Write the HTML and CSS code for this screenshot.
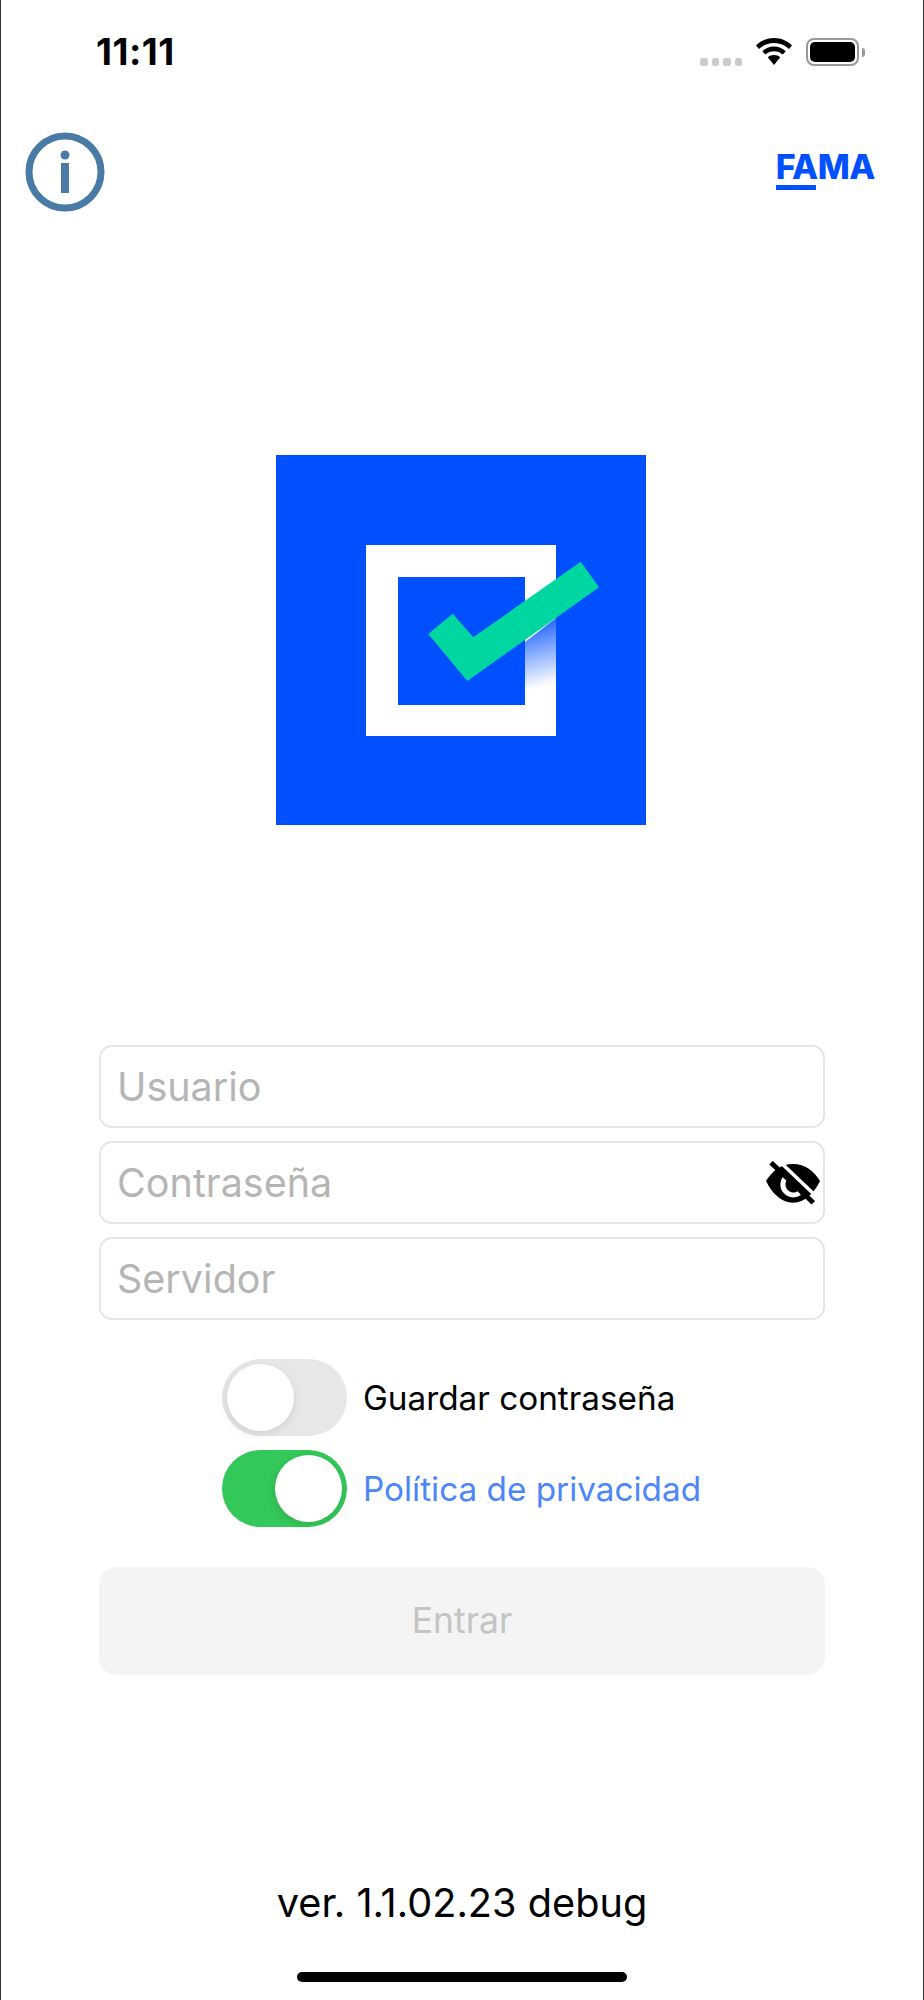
FILE: index.html
```html
<!DOCTYPE html>
<html lang="es">
<head>
<meta charset="utf-8">
<title>FAMA</title>
<link rel="stylesheet" href="styles.css">
</head>
<body>
<main class="screen">
  <div class="status">
    <span class="time">11:11</span>
    <div class="status-icons">
      <div class="signal"><i></i><i></i><i></i><i></i></div>
      <svg class="wifi" width="36" height="27" viewBox="0 0 36 27"><path d="M18 0C11 0 5 2.700 0 7.500L3 11C7 7.200 12 5 18 5S29 7.200 33 11L36 7.500C31 2.700 25 0 18 0Z"/><path d="M18 8.500C13.500 8.500 9.500 10.200 6.300 13.200L9.300 16.600C11.700 14.400 14.700 13.200 18 13.200S24.300 14.400 26.700 16.600L29.700 13.200C26.500 10.200 22.500 8.500 18 8.500Z"/><path d="M18 17C15.600 17 13.500 17.800 11.800 19.300L18 27L24.200 19.300C22.500 17.800 20.400 17 18 17Z"/></svg>
      <div class="battery"><span class="battery-fill"></span></div>
      <span class="battery-tip"></span>
    </div>
  </div>
  <div class="topbar">
    <svg class="info" width="80" height="80" viewBox="0 0 80 80"><circle cx="40" cy="40" r="36" fill="none" stroke="#4a7ba7" stroke-width="7"/><circle cx="40" cy="23" r="4.500" fill="#4a7ba7"/><rect x="36" y="31" width="8" height="30" fill="#4a7ba7"/></svg>
    <div class="brand"><span class="brand-name">FAMA</span><span class="brand-bar"></span></div>
  </div>
  <svg class="logo" width="370" height="370" viewBox="0 0 370 370">
    <defs><linearGradient id="fade" gradientUnits="userSpaceOnUse" x1="264" y1="168" x2="280" y2="228"><stop offset="0" stop-color="#0050ff" stop-opacity=".85"/><stop offset="1" stop-color="#0050ff" stop-opacity="0"/></linearGradient></defs>
    <rect width="370" height="370" fill="#0050ff"/>
    <path fill="#fff" fill-rule="evenodd" d="M90 90H280V281H90ZM122 122V250H249V122Z"/>
    <path fill="url(#fade)" d="M249 187L280 163V250H249Z"/>
    <path fill="#00d6a0" d="M152.300 179L176.700 158.700L197.300 182.300L304.700 106.700L323 132.300L191.300 226Z"/>
  </svg>
  <form class="form">
    <div class="field"><span class="placeholder">Usuario</span></div>
    <div class="field"><span class="placeholder">Contraseña</span>
      <svg class="eye" width="54" height="44" viewBox="0 0 54 44"><path d="M27 3C39 3 48 10 54 20C48 32 39 41.700 27 41.700C15 41.700 6 32 0 20C6 10 15 3 27 3Z"/><path d="M20 16A10.500 10.500 0 0 0 33.500 32" fill="none" stroke="#fff" stroke-width="5"/><path d="M11 -2L53 38" stroke="#fff" stroke-width="3.500"/><path d="M5 1.700L47.300 41.700" stroke="#000" stroke-width="5"/></svg>
    </div>
    <div class="field"><span class="placeholder">Servidor</span></div>
    <div class="options">
      <div class="option">
        <span class="switch"><span class="knob"></span></span>
        <span class="option-label">Guardar contraseña</span>
      </div>
      <div class="option">
        <span class="switch is-on"><span class="knob"></span></span>
        <span class="option-label is-link">Política de privacidad</span>
      </div>
    </div>
    <div class="submit">Entrar</div>
  </form>
  <p class="version">ver. 1.1.02.23 debug</p>
  <div class="home"></div>
</main>
</body>
</html>
```
FILE: styles.css
```css
* { box-sizing: border-box; }
html, body { margin: 0; padding: 0; background: #fff; }
body { font-family: Inter, "Liberation Sans", sans-serif; color: #000; }
.screen {
  width: 924px;
  height: 2000px;
  border-left: 1px solid #333;
  border-right: 1px solid #333;
  display: flex;
  flex-direction: column;
  overflow: hidden;
}
.status {
  display: flex;
  justify-content: space-between;
  align-items: flex-start;
  height: 132px;
  padding: 30px 58px 0 95px;
}
.time { font-size: 37px; line-height: 44px; font-weight: 700; letter-spacing: 0.5px; }
.status-icons { display: flex; align-items: flex-start; padding-top: 8px; }
.signal { display: flex; gap: 4px; margin-top: 20px; margin-right: 14px; }
.signal i { width: 7.500px; height: 8px; border-radius: 2.500px; background: #cbcbcb; }
.wifi { display: block; margin-right: 14px; }
.battery {
  width: 53px;
  height: 28px;
  border: 2px solid #999;
  border-radius: 8px;
  padding: 2px;
}
.battery-fill { display: block; height: 100%; background: #000; border-radius: 5px; }
.battery-tip { width: 3px; height: 9px; margin: 9.500px 0 0 3px; background: #999; border-radius: 0 3px 3px 0; }
.topbar {
  display: flex;
  justify-content: space-between;
  align-items: flex-start;
  height: 323px;
  padding: 0 48px 0 24px;
}
.brand { display: flex; flex-direction: column; margin-top: 15px; }
.brand-name { font-size: 34px; line-height: 40px; font-weight: 800; color: #0050ff; letter-spacing: -0.5px; }
.brand-bar { width: 40px; height: 5px; margin-top: -2px; background: #0050ff; }
.logo { display: block; margin-left: 275px; flex: none; }
.form {
  display: flex;
  flex-direction: column;
  gap: 13px;
  margin: 220px 98px 0;
}
.field {
  display: flex;
  align-items: center;
  justify-content: space-between;
  height: 83px;
  padding: 0 3px 0 16px;
  border: 2px solid #e6e6e6;
  border-radius: 13px;
}
.placeholder { font-size: 39.500px; line-height: 46px; color: #b5b5b5; }
.options { display: flex; flex-direction: column; gap: 14px; margin: 26px 0 0 123px; }
.option { display: flex; align-items: center; gap: 16px; }
.switch {
  display: flex;
  width: 125px;
  height: 77px;
  padding: 5px;
  border-radius: 39px;
  background: #e7e7ea;
}
.switch.is-on { justify-content: flex-end; background: #34c759; }
.knob {
  width: 67px;
  height: 67px;
  border-radius: 50%;
  background: #fff;
  box-shadow: -1px 3px 10px rgba(0,0,0,.1);
}
.option-label { font-size: 33.300px; line-height: 40px; }
.is-link { color: #4d86f7; }
.submit {
  height: 108px;
  margin-top: 27px;
  border-radius: 18px;
  background: #f4f4f4;
  color: #c4c4c4;
  font-size: 35.500px;
  line-height: 108px;
  text-align: center;
}
.version {
  margin: 205px 0 0;
  font-size: 39.700px;
  line-height: 46px;
  text-align: center;
}
.home {
  width: 330px;
  height: 10px;
  margin: 46px 0 0 296px;
  border-radius: 5px;
  background: #000;
}
```
